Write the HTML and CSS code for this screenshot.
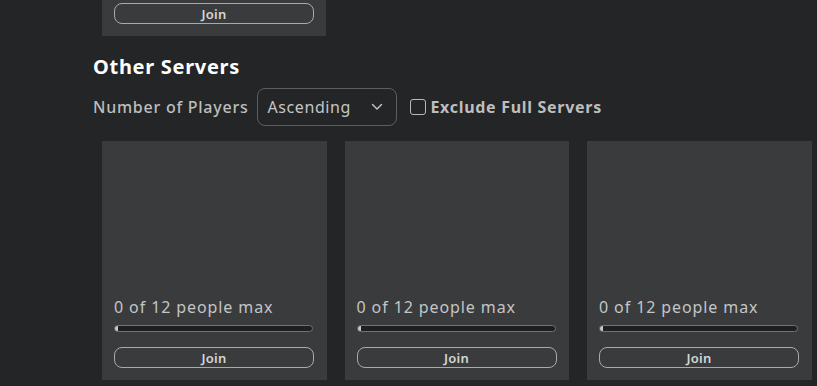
FILE: index.html
```html
<!DOCTYPE html>
<html lang="en">
<head>
    <meta charset="UTF-8">
    <meta name="viewport" content="width=device-width, initial-scale=1.0">
    <title>Servers</title>
    <link rel="stylesheet" href="styles.css">
</head>
<body>
    <div class="top-card">
        <button class="join-btn">Join</button>
    </div>

    <div class="section">
        <h2 class="section-title">Other Servers</h2>
        <div class="filters">
            <span class="filter-label">Number of Players</span>
            <div class="dropdown">
                <span>Ascending</span>
                <svg class="chevron" width="12" height="8" viewBox="0 0 12 8">
                    <path d="M1.5 1.5 L6 6 L10.5 1.5" fill="none" stroke="#c8c9ca" stroke-width="1.4" stroke-linecap="round" stroke-linejoin="round"/>
                </svg>
            </div>
            <label class="exclude">
                <span class="checkbox"></span>
                Exclude Full Servers
            </label>
        </div>
    </div>

    <div class="server-list">
        <div class="server-card">
            <div class="players">0 of 12 people max</div>
            <div class="progress"><div class="progress-fill"></div></div>
            <button class="join-btn">Join</button>
        </div>
        <div class="server-card">
            <div class="players">0 of 12 people max</div>
            <div class="progress"><div class="progress-fill"></div></div>
            <button class="join-btn">Join</button>
        </div>
        <div class="server-card">
            <div class="players">0 of 12 people max</div>
            <div class="progress"><div class="progress-fill"></div></div>
            <button class="join-btn">Join</button>
        </div>
    </div>
</body>
</html>
```

FILE: styles.css
```css
body {
    margin: 0;
    background: #232527;
    font-family: "Noto Sans", Arial, sans-serif;
    color: #bdbebe;
}
.top-card {
    width: 200px;
    margin-left: 102px;
    padding: 3px 12px 12px;
    background: #393b3d;
}
.join-btn {
    display: block;
    width: 200px;
    height: 21px;
    padding: 0;
    background: transparent;
    border: 1px solid #a9aaab;
    border-radius: 8px;
    color: #d5d6d6;
    font-family: "Noto Sans", Arial, sans-serif;
    font-size: 13px;
    font-weight: 600;
    letter-spacing: 0.3px;
}
.section {
    padding-left: 93px;
}
.section-title {
    margin: 17px 0 0;
    font-size: 20px;
    line-height: 28px;
    font-weight: 700;
    letter-spacing: 0.7px;
    color: #ffffff;
}
.filters {
    display: flex;
    align-items: center;
    margin-top: 7px;
}
.filter-label {
    font-size: 16px;
    font-weight: 500;
    letter-spacing: 0.75px;
    margin-right: 9px;
}
.dropdown {
    display: flex;
    align-items: center;
    justify-content: space-between;
    box-sizing: border-box;
    width: 140px;
    height: 38px;
    padding: 0 13px 0 9px;
    border: 1px solid #5c5e60;
    border-radius: 8px;
    font-size: 16px;
    letter-spacing: 0.6px;
    color: #c4c5c6;
}
.exclude {
    display: flex;
    align-items: center;
    margin-left: 13px;
    font-size: 16px;
    font-weight: 700;
    letter-spacing: 0.7px;
}
.checkbox {
    display: inline-block;
    box-sizing: border-box;
    width: 16px;
    height: 16px;
    margin-right: 4px;
    border: 1px solid #b8b9ba;
    border-radius: 3px;
}
.server-list {
    display: flex;
    gap: 18px;
    margin: 15px 0 0 102px;
}
.server-card {
    display: flex;
    flex-direction: column;
    justify-content: flex-end;
    box-sizing: border-box;
    width: 224.5px;
    height: 239px;
    padding: 0 12px 12px;
    background: #393b3d;
}
.players {
    font-size: 16px;
    line-height: 20px;
    letter-spacing: 0.9px;
    color: #c4c5c6;
}
.progress {
    box-sizing: border-box;
    width: 199px;
    height: 7px;
    margin: 8px 0 15px;
    border: 1px solid #707274;
    border-radius: 4px;
    background: #1e1f21;
    overflow: hidden;
}
.progress-fill {
    width: 3px;
    height: 100%;
    background: #c8c9ca;
}
```
